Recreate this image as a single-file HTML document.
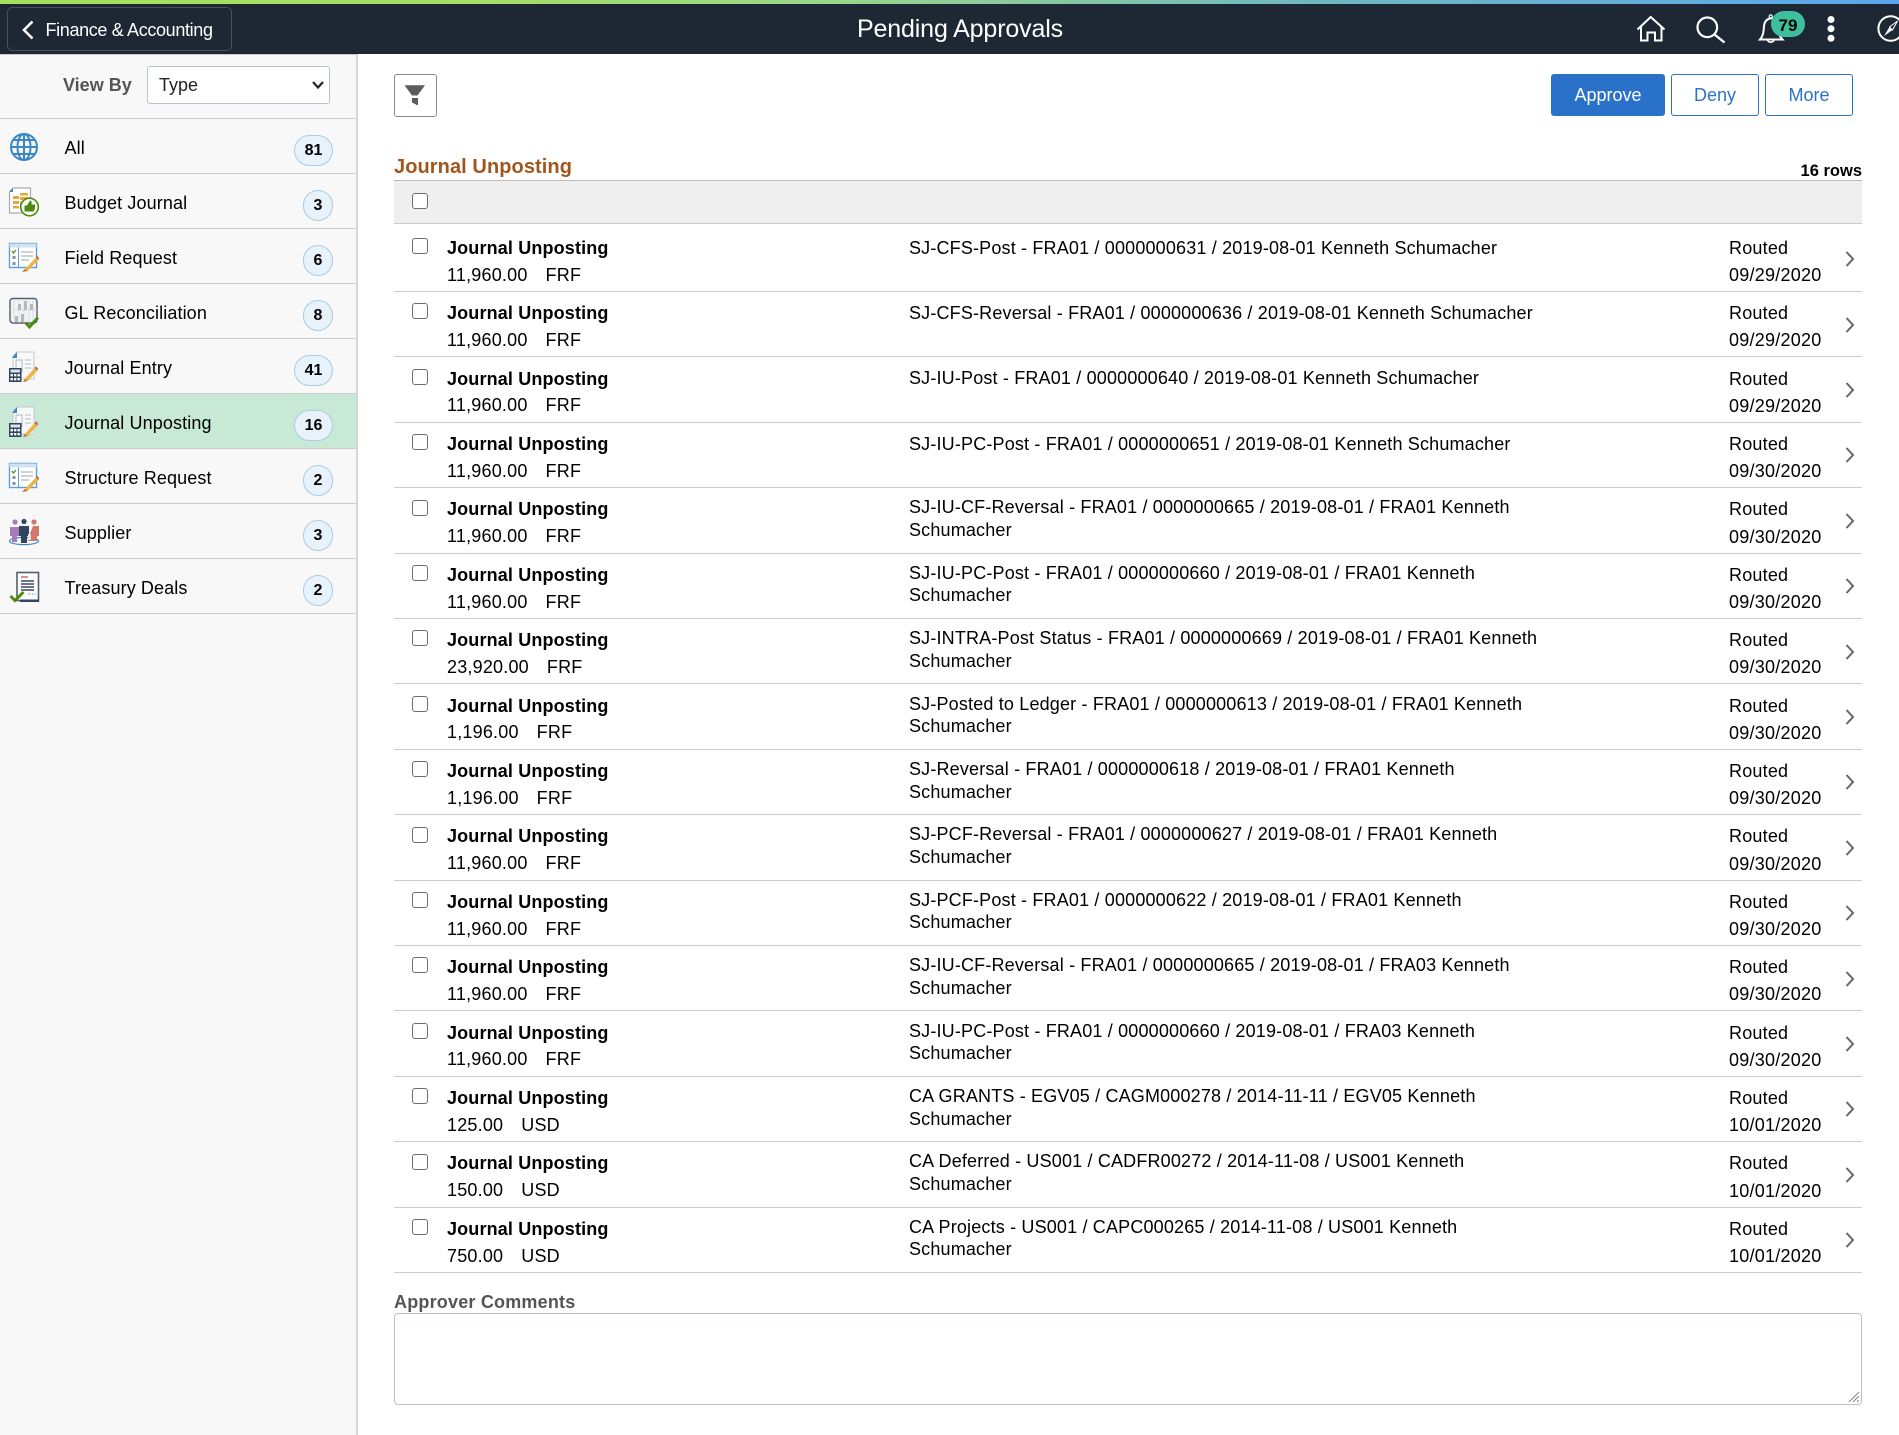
<!DOCTYPE html>
<html lang="en">
<head>
<meta charset="utf-8">
<title>Pending Approvals</title>
<style>
html,body{margin:0;padding:0;background:#fff}
body{position:relative;width:1899px;height:1435px;overflow:hidden;font-family:"Liberation Sans",Arial,sans-serif;font-size:18px;color:#000}
.abs,.abs *{box-sizing:border-box}
.abs{position:absolute}
#stripe{left:0;top:0;width:1899px;height:4px;background:linear-gradient(90deg,#a8e05c 0,#a6de66 25%,#97d58a 45%,#71b9be 68%,#5aa6ee 100%)}
#hdr{left:0;top:4px;width:1899px;height:50px;background:#1e2835}
#back{left:7px;top:7px;width:225px;height:44px;border:1px solid #47505c;border-radius:5px;background:#1e2835}
#backtxt{left:45.5px;top:19px;color:#fff;font-size:18px;line-height:22px;white-space:nowrap;letter-spacing:-.35px}
#title{left:660px;width:600px;top:14px;color:#fff;font-size:25px;line-height:30px;text-align:center;letter-spacing:-.14px}
#side{left:0;top:54px;width:358px;height:1381px;background:#f8f8f8;border-right:2px solid #d4d6d8;border-top:1px solid #c8c8c8}
#vb{left:63px;top:74px;font-weight:bold;color:#555;line-height:22px}
#sel{left:147px;top:66px;width:183px;height:38px;background:#fff;border:1px solid #b9c2cc;border-radius:3px;padding-left:11px;line-height:36px;color:#222}
.si{left:0;width:356px;height:55px;border-bottom:1px solid #ccc}
.sl{position:absolute;left:64.5px;top:18px;line-height:22px;white-space:nowrap;letter-spacing:.12px}
.b{position:absolute;right:23px;top:15.5px;height:31px;border:1px solid #a9cbe3;background:#e8f2fa;border-radius:16px;font-weight:bold;font-size:16px;text-align:center;line-height:29px;width:30px}
.b.w{width:39px}
#filter{left:394px;top:74px;width:43px;height:43px;border:1px solid #8a8a8a;border-radius:3px;background:#fff}
.btn{top:74px;height:42px;border:1px solid #2a72c9;border-radius:3px;text-align:center;line-height:40px;color:#2a72c9;background:#fff}
#h2{left:394px;top:155px;font-size:20px;font-weight:bold;color:#a0561c;line-height:24px;white-space:nowrap;letter-spacing:.08px}
#rows{right:37px;top:161px;font-weight:bold;font-size:16.5px;line-height:20px;white-space:nowrap}
#thead{left:394px;top:180px;width:1468px;height:44px;background:#efefef;border-top:1px solid #bbb;border-bottom:1px solid #ccc}
.cb{position:absolute;left:18px;width:16px;height:16px;border:1px solid #6e6e6e;border-radius:3px;background:#fff}
.r{left:394px;width:1468px;height:65.4px;border-bottom:1px solid #ccc}
.r .cb{top:11.4px}
.t{position:absolute;left:53px;top:10.3px;font-weight:bold;line-height:22px;white-space:nowrap;letter-spacing:.15px}
.a{position:absolute;left:53px;top:37px;line-height:22px;white-space:pre;letter-spacing:.2px;word-spacing:.8px}
.d{position:absolute;left:515px;top:9px;line-height:22px;white-space:nowrap;letter-spacing:.17px}
.d.o{top:10px}
.d.w{top:8.25px;line-height:22.5px}
.s{position:absolute;left:1335px;top:10.3px;line-height:22px;white-space:nowrap;letter-spacing:.2px}
.e{position:absolute;left:1335px;top:37.4px;line-height:22px;white-space:nowrap;letter-spacing:.24px}
.c{position:absolute;left:1450px;top:23.5px}
#lbl{left:394px;top:1291px;font-weight:bold;color:#555;line-height:22px;white-space:nowrap;letter-spacing:.2px}
#ta{left:394px;top:1313px;width:1468px;height:92px;border:1px solid #b9c2cc;border-radius:4px;background:#fff}
</style>
</head>
<body>
<div class="abs" id="stripe"></div>
<div class="abs" id="hdr"></div>
<div class="abs" id="back"></div>
<svg class="abs" style="left:20px;top:18px" width="16" height="24" viewBox="0 0 16 24"><path d="M12.5 3.5 L4 12 L12.5 20.5" fill="none" stroke="#fff" stroke-width="2.6"/></svg>
<div class="abs" id="backtxt">Finance &amp; Accounting</div>
<div class="abs" id="title">Pending Approvals</div>

<svg class="abs" style="left:1620px;top:0" width="279" height="54" viewBox="1620 0 279 54">
  <g fill="none" stroke="#fff" stroke-width="2">
    <path d="M1637.5 29.5 L1650.7 17 L1664.5 29.5"/>
    <path d="M1641 26.5 V40.5 H1647.5 V32.5 H1655 V40.5 H1661.5 V26.5"/>
    <circle cx="1707.3" cy="27.3" r="9.8" stroke-width="2.2"/>
    <path d="M1714.5 34.5 L1724.5 42.5" stroke-width="2.4"/>
    <path d="M1760 39.5 C1764 35 1763.5 30 1764 26 C1764.6 21 1767.5 18.8 1771 18.3 C1775 18.8 1777.5 21 1778 26 C1778.5 30 1778 35 1782.5 39.5 Z"/>
    <circle cx="1770.7" cy="16.5" r="1.6" stroke-width="1.2"/>
    <path d="M1767.5 40 A3.3 2.6 0 0 0 1774 40" stroke-width="1.6"/>
    <circle cx="1890.7" cy="28.5" r="12.3" stroke-width="2"/>
  </g>
  <path d="M1884 36 L1889.5 27 L1892.5 30 Z" fill="#fff"/>
  <path d="M1897.5 21 L1892.5 30 L1889.5 27 Z" fill="none" stroke="#fff" stroke-width="1"/>
  <circle cx="1831" cy="19.5" r="3.5" fill="#fff"/>
  <circle cx="1831" cy="28.7" r="3.5" fill="#fff"/>
  <circle cx="1831" cy="38.3" r="3.5" fill="#fff"/>
  <rect x="1771" y="11" width="34" height="26" rx="13" fill="#3dbf9d"/>
  <text x="1788" y="31" font-family="'Liberation Sans',Arial,sans-serif" font-size="17" font-weight="bold" text-anchor="middle" fill="#000">79</text>
</svg>

<div class="abs" id="side"></div>
<div class="abs" style="left:0;top:55px;width:356px;height:63.5px;border-bottom:1px solid #c8ccd2"></div>
<div class="abs" id="vb">View By</div>
<div class="abs" id="sel">Type</div>
<svg class="abs" style="left:311px;top:80px" width="14" height="10" viewBox="0 0 14 10"><path d="M2 2 L7 7.5 L12 2" fill="none" stroke="#222" stroke-width="2.2"/></svg>

<div class="abs si" style="top:119px"><span class="sl">All</span><span class="b w">81</span></div>
<div class="abs si" style="top:174px"><span class="sl">Budget Journal</span><span class="b">3</span></div>
<div class="abs si" style="top:229px"><span class="sl">Field Request</span><span class="b">6</span></div>
<div class="abs si" style="top:284px"><span class="sl">GL Reconciliation</span><span class="b">8</span></div>
<div class="abs si" style="top:339px"><span class="sl">Journal Entry</span><span class="b w">41</span></div>
<div class="abs si" style="top:394px;background:#c8e9d6"><span class="sl">Journal Unposting</span><span class="b w">16</span></div>
<div class="abs si" style="top:449px"><span class="sl">Structure Request</span><span class="b">2</span></div>
<div class="abs si" style="top:504px"><span class="sl">Supplier</span><span class="b">3</span></div>
<div class="abs si" style="top:559px"><span class="sl">Treasury Deals</span><span class="b">2</span></div>

<svg class="abs" style="left:0;top:120px" width="60" height="500" viewBox="0 120 60 500">
  <!-- globe -->
  <g fill="none" stroke="#3a87c8" stroke-width="2">
    <circle cx="24" cy="147" r="13"/>
    <ellipse cx="24" cy="147" rx="6.5" ry="13"/>
    <path d="M24 134V160M11 147H37M13 140H35M13 154H35"/>
  </g>
  <!-- budget journal -->
  <path d="M13 188H30.5V213H9.5V192Z" fill="#fff" stroke="#a9acb0" stroke-width="1.2"/>
  <path d="M9.5 192L13 188V192Z" fill="#3a87c8"/>
  <g fill="#e2a93b"><rect x="13" y="196" width="6" height="3"/><rect x="13" y="201" width="6" height="3"/><rect x="13" y="206" width="6" height="2.5"/><rect x="20" y="193" width="8" height="2.5"/><rect x="20" y="197" width="8" height="3"/><rect x="20" y="201.5" width="6" height="3"/></g>
  <circle cx="29.5" cy="207" r="8.8" fill="#fff" stroke="#4f8a10" stroke-width="1.6"/>
  <path d="M24.5 205.5H27L30 200.5C31.5 200.5 32 202 31.5 204.5H35C35.5 208 34.5 211 33 211.5H24.5Z" fill="#4f8a10"/>
  <!-- field request -->
  <g id="form">
    <rect x="9.5" y="243.5" width="27" height="24" fill="#fff" stroke="#5a9fd8" stroke-width="1.4"/>
    <rect x="9.5" y="243.5" width="27" height="4" fill="#cfe3f4"/>
    <path d="M18.5 247.5V267.5" stroke="#5a9fd8" stroke-width="1"/>
    <path d="M12 251L13.5 253L16 250" fill="none" stroke="#4f8a10" stroke-width="1.3"/>
    <rect x="12.5" y="256" width="3" height="3" fill="#8a9096"/><rect x="12.5" y="262" width="3" height="3" fill="#8a9096"/>
    <path d="M21 252H33M21 256H33M21 260H29" stroke="#b0b4b8" stroke-width="1.2"/>
    <path d="M25 269L36 257.5L38.5 260L27.5 271Z" fill="#eeb342"/>
    <path d="M36 257.5L37.5 256L39 258L38.5 260Z" fill="#c0613e"/>
    <path d="M25 269L27.5 271L22 272Z" fill="#c0613e"/>
  </g>
  <!-- gl reconciliation -->
  <rect x="10" y="298.5" width="27" height="24.5" rx="3" fill="#f2f3f4" stroke="#4e5c6c" stroke-width="1.4"/>
  <path d="M10 310H37M14 299V323M19 299V323M24 299V323M29 299V323M33 299V323" stroke="#d5d7da" stroke-width=".8"/>
  <g fill="#b4b8bc"><rect x="18" y="304" width="3" height="6"/><rect x="24" y="301" width="3" height="9"/><rect x="30" y="304" width="3" height="6"/><rect x="15" y="316" width="3" height="6"/><rect x="21" y="314" width="3" height="8"/></g>
  <path d="M25.5 322.5L29.5 327L38 317.5" fill="none" stroke="#4f8a10" stroke-width="3"/>
  <!-- journal entry -->
  <g id="je">
    <path d="M17 352H34V379H13V356Z" fill="#f7f8f9" stroke="#c4c8cc" stroke-width="1"/>
    <path d="M12 358L17 352V358Z" fill="#3a87c8"/>
    <path d="M16 360H22V372H16ZM25 360H31M25 364H31M25 368H31" fill="none" stroke="#b4b8bc" stroke-width="1"/>
    <rect x="9" y="368" width="12.5" height="14" fill="#2f4560"/>
    <rect x="10.5" y="369.5" width="9.5" height="3" fill="#dfe3e7"/>
    <g fill="#fff"><rect x="10.5" y="374" width="2.4" height="2.4"/><rect x="14" y="374" width="2.4" height="2.4"/><rect x="17.5" y="374" width="2.4" height="2.4"/><rect x="10.5" y="378" width="2.4" height="2.4"/><rect x="14" y="378" width="2.4" height="2.4"/><rect x="17.5" y="378" width="2.4" height="2.4"/></g>
    <path d="M25 379L34.5 368L37.5 370.5L27.5 381Z" fill="#eeb342"/>
    <path d="M34.5 368L36 366.5L38 368.5L37.5 370.5Z" fill="#c0613e"/>
    <path d="M25 379L27.5 381L23 382Z" fill="#c0613e"/>
  </g>
  <!-- journal unposting -->
  <g transform="translate(0,55)">
    <path d="M17 352H34V379H13V356Z" fill="#f7f8f9" stroke="#c4c8cc" stroke-width="1"/>
    <path d="M12 358L17 352V358Z" fill="#3a87c8"/>
    <path d="M16 360H22V372H16ZM25 360H31M25 364H31M25 368H31" fill="none" stroke="#b4b8bc" stroke-width="1"/>
    <rect x="9" y="368" width="12.5" height="14" fill="#2f4560"/>
    <rect x="10.5" y="369.5" width="9.5" height="3" fill="#dfe3e7"/>
    <g fill="#fff"><rect x="10.5" y="374" width="2.4" height="2.4"/><rect x="14" y="374" width="2.4" height="2.4"/><rect x="17.5" y="374" width="2.4" height="2.4"/><rect x="10.5" y="378" width="2.4" height="2.4"/><rect x="14" y="378" width="2.4" height="2.4"/><rect x="17.5" y="378" width="2.4" height="2.4"/></g>
    <path d="M25 379L34.5 368L37.5 370.5L27.5 381Z" fill="#eeb342"/>
    <path d="M34.5 368L36 366.5L38 368.5L37.5 370.5Z" fill="#c0613e"/>
    <path d="M25 379L27.5 381L23 382Z" fill="#c0613e"/>
  </g>
  <!-- structure request -->
  <g transform="translate(0,220)">
    <rect x="9.5" y="243.5" width="27" height="24" fill="#fff" stroke="#5a9fd8" stroke-width="1.4"/>
    <rect x="9.5" y="243.5" width="27" height="4" fill="#cfe3f4"/>
    <path d="M18.5 247.5V267.5" stroke="#5a9fd8" stroke-width="1"/>
    <path d="M12 251L13.5 253L16 250" fill="none" stroke="#4f8a10" stroke-width="1.3"/>
    <rect x="12.5" y="256" width="3" height="3" fill="#8a9096"/><rect x="12.5" y="262" width="3" height="3" fill="#8a9096"/>
    <path d="M21 252H33M21 256H33M21 260H29" stroke="#b0b4b8" stroke-width="1.2"/>
    <path d="M25 269L36 257.5L38.5 260L27.5 271Z" fill="#eeb342"/>
    <path d="M36 257.5L37.5 256L39 258L38.5 260Z" fill="#c0613e"/>
    <path d="M25 269L27.5 271L22 272Z" fill="#c0613e"/>
  </g>
  <!-- supplier -->
  <ellipse cx="24" cy="541" rx="14.5" ry="3.6" fill="none" stroke="#3a87c8" stroke-width="1.2"/>
  <circle cx="15" cy="522" r="2.6" fill="#a67bb8"/><circle cx="24" cy="521.5" r="2.6" fill="#2f4560"/><circle cx="34" cy="522" r="2.6" fill="#d27868"/>
  <path d="M10 527H19V536H17V542H12V536H10Z" fill="#a67bb8"/>
  <path d="M33 526H39V536H37V541H28V536H29Z" fill="#d27868"/>
  <path d="M19 526H29V536H27V543H21V536H19Z" fill="#2f4560"/>
  <rect x="28" y="534" width="3" height="6" fill="#e6e6e6"/>
  <!-- treasury -->
  <rect x="17" y="572.5" width="21.5" height="28" fill="#fff" stroke="#55606c" stroke-width="1.6"/>
  <path d="M21 577H28" stroke="#c9453e" stroke-width="1.2"/>
  <path d="M21 581H34M21 584H34M21 587H34M21 590H34" stroke="#3a4a5e" stroke-width="1.4"/>
  <path d="M28 594H36" stroke="#5a9fd8" stroke-width="1" stroke-dasharray="2 1.5"/>
  <rect x="20" y="599.5" width="19" height="2.5" fill="#2f4560"/>
  <path d="M10.5 596L15 600.5L23.5 592" fill="none" stroke="#4f8a10" stroke-width="3"/>
</svg>

<div class="abs" id="filter"></div>
<svg class="abs" style="left:394px;top:74px" width="43" height="43" viewBox="0 0 43 43"><path d="M10.5 11.3H31L23.5 21.5H18Z" fill="#5c5c5c"/><path d="M18 24H24V31.5L18 28.5Z" fill="#5c5c5c"/></svg>
<div class="abs btn" style="left:1551px;width:114px;background:#2a72c9;color:#fff">Approve</div>
<div class="abs btn" style="left:1671px;width:88px">Deny</div>
<div class="abs btn" style="left:1765px;width:88px">More</div>

<div class="abs" id="h2">Journal Unposting</div>
<div class="abs" id="rows">16 rows</div>
<div class="abs" id="thead"><div class="cb" style="top:12px"></div></div>

<div class="abs r" style="top:226.6px"><div class="cb"></div><div class="t">Journal Unposting</div><div class="a">11,960.00   FRF</div><div class="d o">SJ-CFS-Post - FRA01 / 0000000631 / 2019-08-01 Kenneth Schumacher</div><div class="s">Routed</div><div class="e">09/29/2020</div><svg class="c" width="12" height="18" viewBox="0 0 12 18"><path d="M2.5 2L9 9L2.5 16" fill="none" stroke="#666" stroke-width="2"/></svg></div>
<div class="abs r" style="top:292px"><div class="cb"></div><div class="t">Journal Unposting</div><div class="a">11,960.00   FRF</div><div class="d o">SJ-CFS-Reversal - FRA01 / 0000000636 / 2019-08-01 Kenneth Schumacher</div><div class="s">Routed</div><div class="e">09/29/2020</div><svg class="c" width="12" height="18" viewBox="0 0 12 18"><path d="M2.5 2L9 9L2.5 16" fill="none" stroke="#666" stroke-width="2"/></svg></div>
<div class="abs r" style="top:357.4px"><div class="cb"></div><div class="t">Journal Unposting</div><div class="a">11,960.00   FRF</div><div class="d o">SJ-IU-Post - FRA01 / 0000000640 / 2019-08-01 Kenneth Schumacher</div><div class="s">Routed</div><div class="e">09/29/2020</div><svg class="c" width="12" height="18" viewBox="0 0 12 18"><path d="M2.5 2L9 9L2.5 16" fill="none" stroke="#666" stroke-width="2"/></svg></div>
<div class="abs r" style="top:422.8px"><div class="cb"></div><div class="t">Journal Unposting</div><div class="a">11,960.00   FRF</div><div class="d o">SJ-IU-PC-Post - FRA01 / 0000000651 / 2019-08-01 Kenneth Schumacher</div><div class="s">Routed</div><div class="e">09/30/2020</div><svg class="c" width="12" height="18" viewBox="0 0 12 18"><path d="M2.5 2L9 9L2.5 16" fill="none" stroke="#666" stroke-width="2"/></svg></div>
<div class="abs r" style="top:488.2px"><div class="cb"></div><div class="t">Journal Unposting</div><div class="a">11,960.00   FRF</div><div class="d w">SJ-IU-CF-Reversal - FRA01 / 0000000665 / 2019-08-01 / FRA01 Kenneth<br>Schumacher</div><div class="s">Routed</div><div class="e">09/30/2020</div><svg class="c" width="12" height="18" viewBox="0 0 12 18"><path d="M2.5 2L9 9L2.5 16" fill="none" stroke="#666" stroke-width="2"/></svg></div>
<div class="abs r" style="top:553.6px"><div class="cb"></div><div class="t">Journal Unposting</div><div class="a">11,960.00   FRF</div><div class="d w">SJ-IU-PC-Post - FRA01 / 0000000660 / 2019-08-01 / FRA01 Kenneth<br>Schumacher</div><div class="s">Routed</div><div class="e">09/30/2020</div><svg class="c" width="12" height="18" viewBox="0 0 12 18"><path d="M2.5 2L9 9L2.5 16" fill="none" stroke="#666" stroke-width="2"/></svg></div>
<div class="abs r" style="top:619px"><div class="cb"></div><div class="t">Journal Unposting</div><div class="a">23,920.00   FRF</div><div class="d w">SJ-INTRA-Post Status - FRA01 / 0000000669 / 2019-08-01 / FRA01 Kenneth<br>Schumacher</div><div class="s">Routed</div><div class="e">09/30/2020</div><svg class="c" width="12" height="18" viewBox="0 0 12 18"><path d="M2.5 2L9 9L2.5 16" fill="none" stroke="#666" stroke-width="2"/></svg></div>
<div class="abs r" style="top:684.4px"><div class="cb"></div><div class="t">Journal Unposting</div><div class="a">1,196.00   FRF</div><div class="d w">SJ-Posted to Ledger - FRA01 / 0000000613 / 2019-08-01 / FRA01 Kenneth<br>Schumacher</div><div class="s">Routed</div><div class="e">09/30/2020</div><svg class="c" width="12" height="18" viewBox="0 0 12 18"><path d="M2.5 2L9 9L2.5 16" fill="none" stroke="#666" stroke-width="2"/></svg></div>
<div class="abs r" style="top:749.8px"><div class="cb"></div><div class="t">Journal Unposting</div><div class="a">1,196.00   FRF</div><div class="d w">SJ-Reversal - FRA01 / 0000000618 / 2019-08-01 / FRA01 Kenneth<br>Schumacher</div><div class="s">Routed</div><div class="e">09/30/2020</div><svg class="c" width="12" height="18" viewBox="0 0 12 18"><path d="M2.5 2L9 9L2.5 16" fill="none" stroke="#666" stroke-width="2"/></svg></div>
<div class="abs r" style="top:815.2px"><div class="cb"></div><div class="t">Journal Unposting</div><div class="a">11,960.00   FRF</div><div class="d w">SJ-PCF-Reversal - FRA01 / 0000000627 / 2019-08-01 / FRA01 Kenneth<br>Schumacher</div><div class="s">Routed</div><div class="e">09/30/2020</div><svg class="c" width="12" height="18" viewBox="0 0 12 18"><path d="M2.5 2L9 9L2.5 16" fill="none" stroke="#666" stroke-width="2"/></svg></div>
<div class="abs r" style="top:880.6px"><div class="cb"></div><div class="t">Journal Unposting</div><div class="a">11,960.00   FRF</div><div class="d w">SJ-PCF-Post - FRA01 / 0000000622 / 2019-08-01 / FRA01 Kenneth<br>Schumacher</div><div class="s">Routed</div><div class="e">09/30/2020</div><svg class="c" width="12" height="18" viewBox="0 0 12 18"><path d="M2.5 2L9 9L2.5 16" fill="none" stroke="#666" stroke-width="2"/></svg></div>
<div class="abs r" style="top:946px"><div class="cb"></div><div class="t">Journal Unposting</div><div class="a">11,960.00   FRF</div><div class="d w">SJ-IU-CF-Reversal - FRA01 / 0000000665 / 2019-08-01 / FRA03 Kenneth<br>Schumacher</div><div class="s">Routed</div><div class="e">09/30/2020</div><svg class="c" width="12" height="18" viewBox="0 0 12 18"><path d="M2.5 2L9 9L2.5 16" fill="none" stroke="#666" stroke-width="2"/></svg></div>
<div class="abs r" style="top:1011.4px"><div class="cb"></div><div class="t">Journal Unposting</div><div class="a">11,960.00   FRF</div><div class="d w">SJ-IU-PC-Post - FRA01 / 0000000660 / 2019-08-01 / FRA03 Kenneth<br>Schumacher</div><div class="s">Routed</div><div class="e">09/30/2020</div><svg class="c" width="12" height="18" viewBox="0 0 12 18"><path d="M2.5 2L9 9L2.5 16" fill="none" stroke="#666" stroke-width="2"/></svg></div>
<div class="abs r" style="top:1076.8px"><div class="cb"></div><div class="t">Journal Unposting</div><div class="a">125.00   USD</div><div class="d w">CA GRANTS - EGV05 / CAGM000278 / 2014-11-11 / EGV05 Kenneth<br>Schumacher</div><div class="s">Routed</div><div class="e">10/01/2020</div><svg class="c" width="12" height="18" viewBox="0 0 12 18"><path d="M2.5 2L9 9L2.5 16" fill="none" stroke="#666" stroke-width="2"/></svg></div>
<div class="abs r" style="top:1142.2px"><div class="cb"></div><div class="t">Journal Unposting</div><div class="a">150.00   USD</div><div class="d w">CA Deferred - US001 / CADFR00272 / 2014-11-08 / US001 Kenneth<br>Schumacher</div><div class="s">Routed</div><div class="e">10/01/2020</div><svg class="c" width="12" height="18" viewBox="0 0 12 18"><path d="M2.5 2L9 9L2.5 16" fill="none" stroke="#666" stroke-width="2"/></svg></div>
<div class="abs r" style="top:1207.6px"><div class="cb"></div><div class="t">Journal Unposting</div><div class="a">750.00   USD</div><div class="d w">CA Projects - US001 / CAPC000265 / 2014-11-08 / US001 Kenneth<br>Schumacher</div><div class="s">Routed</div><div class="e">10/01/2020</div><svg class="c" width="12" height="18" viewBox="0 0 12 18"><path d="M2.5 2L9 9L2.5 16" fill="none" stroke="#666" stroke-width="2"/></svg></div>

<div class="abs" id="lbl">Approver Comments</div>
<div class="abs" id="ta"></div>
<svg class="abs" style="left:1848px;top:1391px" width="12" height="12" viewBox="0 0 12 12"><path d="M1 11L11 1M5 11L11 5M9 11L11 9" stroke="#666" stroke-width=".8" fill="none"/></svg>
</body>
</html>
